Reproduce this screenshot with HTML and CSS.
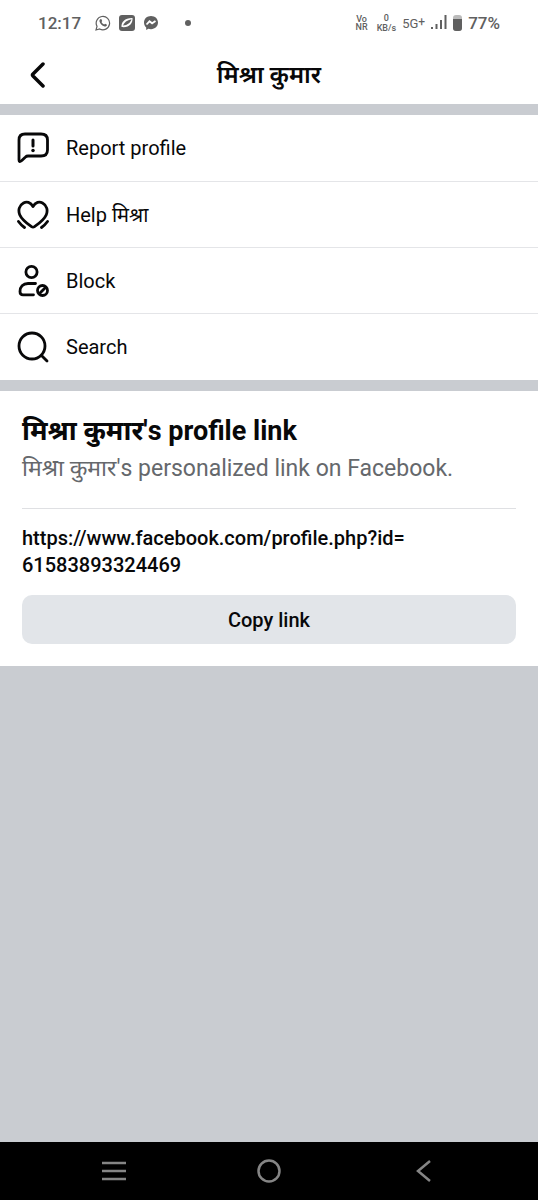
FILE: index.html
```html
<!DOCTYPE html>
<html lang="en">
<head>
<meta charset="utf-8">
<meta name="viewport" content="width=device-width, initial-scale=1">
<title>Profile options</title>
<link rel="stylesheet" href="styles.css">
</head>
<body>
<div class="screen">
  <div class="status">
    <div class="status-left">
      <span class="clock">12:17</span>
      <svg class="app-icon" viewBox="0 0 16 16" fill="none" stroke="currentColor"><path d="M1 15l1-3.700A6.700 6.700 0 1 1 4.700 14z" stroke-width="1.200"/><path d="M5.300 4.300l1-.2.900 2-.7.900c.6 1.200 1.400 2 2.700 2.600l.9-.8 1.900.9c0 1.300-1.200 2-2.400 1.800C7 11 5 8.800 4.500 6.600c-.2-.9.1-1.700.8-2.300z" fill="currentColor" stroke="none"/></svg>
      <svg class="app-icon" viewBox="0 0 16 16"><rect width="16" height="16" rx="3" fill="currentColor"/><path d="M2.500 12C2 7 6 2.800 13.500 3 14 8.500 10 13 2.500 12z" fill="#fff"/><path d="M4 10.500C5 7.500 8 5 12.500 4.200 11.500 7.500 8.500 10.300 4 10.500z" fill="currentColor"/></svg>
      <svg class="app-icon messenger" viewBox="0 0 16 16"><path d="M8 1C4 1 1 3.800 1 7.600c0 2 .8 3.700 2.200 4.900V15l2.200-1.200c.8.200 1.700.4 2.600.4 4 0 7-2.800 7-6.600S12 1 8 1z" fill="currentColor"/><path d="M3.500 9.500l3-3.200 2.600 2L12.500 6" fill="none" stroke="#fff" stroke-width="1.800"/></svg>
      <span class="dot"></span>
    </div>
    <div class="status-right">
      <span class="tiny">Vo<br>NR</span>
      <span class="tiny speed">0<br>KB/s</span>
      <span class="network">5G<span class="plus">+</span></span>
      <svg class="signal" viewBox="0 0 16 15" fill="currentColor"><path d="M0 12h2v2H0zM4.500 9h2v5h-2zM9 5h2v9H9zM13.500 0h2v14h-2z"/></svg>
      <svg class="battery" viewBox="0 0 9 16"><rect width="9" height="16" rx="3" fill="#bbb"/><path d="M0 4h9v9a3 3 0 0 1-3 3H3a3 3 0 0 1-3-3z" fill="currentColor"/></svg>
      <span class="percent">77%</span>
    </div>
  </div>
  <header class="header">
    <button class="back" aria-label="Back"><svg viewBox="0 0 16 26" fill="none" stroke="currentColor" stroke-width="3.500" stroke-linecap="round" stroke-linejoin="round"><path d="M14 2L4 12q-1 1 0 2l10 10"/></svg></button>
    <h1 class="title">मिश्रा कुमार</h1>
  </header>
  <main class="content">
    <nav class="menu">
      <button class="item"><svg viewBox="0 0 32 32" fill="none" stroke="currentColor" stroke-width="2.800" stroke-linejoin="round" stroke-linecap="round"><path d="M2 8q0-6 6-6h16q6.500 0 6.500 6v10q0 6-6.500 6H11q-1.500 0-2.500 1l-3.700 3.500Q2 31 2 28z"/><path d="M16 8v6" stroke-width="3"/><path d="M16 18.500v.1" stroke-width="3.500"/></svg><span>Report profile</span></button>
      <button class="item"><svg viewBox="0 0 32 32" fill="none" stroke="currentColor" stroke-width="2.800" stroke-linejoin="round" stroke-linecap="round"><path d="M16 7.500C13.500 3 9.500 2.300 6.500 4 2 6.500 1 11.500 2.700 15.700 4.700 20.500 10 24.500 14.500 27.700q1.500 1 3 0C22 24.500 27.300 20.500 29.300 15.700 31 11.500 30 6.500 25.500 4c-3-1.700-7-1-9.500 3.500z"/><path d="M1.500 22.500q2.500 3.500 6 6M30.500 22.500q-2.500 3.500-6 6"/></svg><span>Help मिश्रा</span></button>
      <button class="item"><svg viewBox="0 0 32 32" fill="none" stroke="currentColor" stroke-width="2.800" stroke-linecap="round"><circle cx="14.500" cy="7" r="5.600"/><path d="M18.500 18.500H11c-5 0-8 3.500-8 8 0 2 1.200 3.300 3 3.300h10.500"/><circle cx="25.500" cy="25.500" r="5"/><path d="M22.500 28.500l6-6"/></svg><span>Block</span></button>
      <button class="item"><svg viewBox="0 0 32 32" fill="none" stroke="currentColor" stroke-width="2.800" stroke-linecap="round"><circle cx="15" cy="15" r="13"/><path d="M24.500 24.500l5.500 5.500"/></svg><span>Search</span></button>
    </nav>
    <section class="link-card">
      <h2 class="link-title">मिश्रा कुमार's profile link</h2>
      <p class="link-note">मिश्रा कुमार's personalized link on Facebook.</p>
      <p class="url">https://www.facebook.com/profile.php?id=<wbr>61583893324469</p>
      <button class="copy">Copy link</button>
    </section>
  </main>
  <footer class="system-nav">
    <button aria-label="Recent apps"><svg viewBox="0 0 26 26"><path d="M1 5h24M1 13h24M1 21h24"/></svg></button>
    <button aria-label="Home"><svg viewBox="0 0 26 26"><circle cx="13" cy="13" r="10.500"/></svg></button>
    <button aria-label="System back"><svg viewBox="0 0 26 26"><path d="M19 3L7 13l12 10"/></svg></button>
  </footer>
</div>
</body>
</html>
```
FILE: styles.css
```css
* { box-sizing: border-box; }
body { margin: 0; font-family: Roboto, "Noto Sans", sans-serif; color: #080809; }
h1, h2, p { margin: 0; }
button { border: 0; padding: 0; background: none; color: inherit; font: inherit; }
svg { display: block; flex: none; }
.screen { min-height: 100vh; display: flex; flex-direction: column; background: #c9ccd1; }

.status { height: 45px; padding: 0 38px; display: flex; justify-content: space-between; align-items: center; background: #fff; color: #606060; }
.status-left, .status-right { display: flex; align-items: center; }
.status-left { gap: 8px; }
.clock { font-size: 17px; font-weight: 500; margin-right: 6px; }
.app-icon { width: 16px; height: 16px; }
.dot { width: 6px; height: 6px; border-radius: 50%; background: currentColor; margin-left: 18px; }
.status-right { gap: 6px; }
.tiny { font-size: 9px; line-height: 8px; font-weight: 500; text-align: center; }
.speed { line-height: 10px; margin-left: 3px; }
.network { font-size: 13px; line-height: 16px; }
.plus { font-size: 12px; vertical-align: 2px; }
.signal { width: 16px; height: 15px; }
.battery { width: 9px; height: 16px; }
.percent { font-size: 17px; font-weight: 500; }

.header { height: 59px; padding: 0 29px; display: grid; grid-template-columns: 20px 1fr 20px; align-items: center; background: #fff; }
.back svg { width: 16px; height: 26px; }
.title { font-size: 24px; line-height: 30px; font-weight: 600; text-align: center; }

.content { flex: 1; padding-top: 11px; display: flex; flex-direction: column; gap: 11px; }
.menu { background: #fff; }
.item { width: 100%; height: 66px; padding: 0 17px; display: flex; align-items: center; gap: 17px; font-size: 20px; text-align: left; }
.item + .item { border-top: 1px solid #e4e5e8; }
.item:last-child { height: 67px; }
.item svg { width: 32px; height: 32px; }

.link-card { padding: 22px; background: #fff; }
.link-title { font-size: 27px; line-height: 36px; font-weight: 700; }
.link-note { padding: 4px 0 23px; border-bottom: 1px solid #dfe0e3; font-size: 23px; line-height: 32px; color: #65686c; }
.url { padding: 16px 0; font-size: 20px; line-height: 27px; font-weight: 500; }
.copy { width: 100%; height: 49px; border-radius: 10px; background: #e2e5e9; font-size: 20px; font-weight: 500; }

.system-nav { height: 58px; padding: 0 36px; display: grid; grid-template-columns: repeat(3, 1fr); background: #000; color: #858585; }
.system-nav button { display: flex; align-items: center; justify-content: center; }
.system-nav svg { width: 26px; height: 26px; fill: none; stroke: currentColor; stroke-width: 2.5; }
```
